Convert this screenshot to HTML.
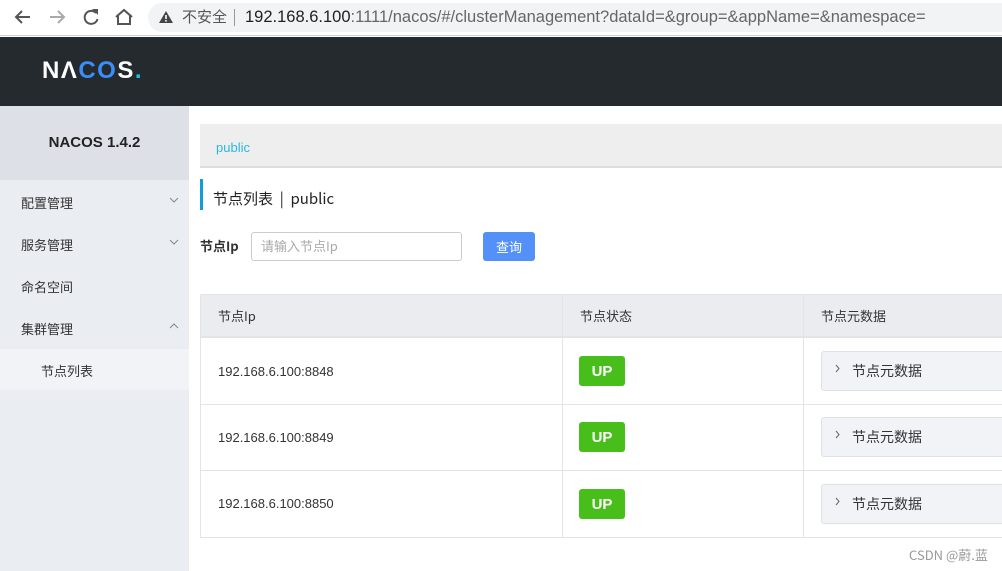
<!DOCTYPE html>
<html><head><meta charset="utf-8"><style>
*{margin:0;padding:0;box-sizing:border-box}
body{width:1002px;height:571px;overflow:hidden;background:#fff;font-family:"Liberation Sans","Noto Sans CJK SC",sans-serif;position:relative;color:#333}
.abs{position:absolute}
.cn{font-family:"Noto Sans CJK SC","WenQuanYi Zen Hei",sans-serif}
</style></head><body>
<div class="abs" style="left:0;top:0;width:1002px;height:36px;background:#fff;border-bottom:1px solid #d0d0d0"></div>
<svg class="abs" style="left:10px;top:6px" width="130" height="22" viewBox="0 0 130 22">
<path d="M20 11H6M12 5l-6 6 6 6" stroke="#555" stroke-width="2" fill="none"/>
<path d="M40 11h14M48 5l6 6-6 6" stroke="#aaa" stroke-width="2" fill="none"/>
<path d="M86 7a6.5 6.5 0 1 0 1.5 6" stroke="#555" stroke-width="2" fill="none"/><path d="M82 3h6v6z" fill="#555"/>
<path d="M106 11l8-7 8 7M108 9v9h12V9" stroke="#555" stroke-width="2" fill="none"/>
</svg>
<div class="abs" style="left:148px;top:3px;width:854px;height:29px;background:#f1f3f4;border-radius:15px 0 0 15px"></div>
<svg class="abs" style="left:158px;top:10px" width="16" height="14"><path d="M8 1L15 13H1z" fill="#444"/><rect x="7.2" y="5" width="1.6" height="4" fill="#fff"/><rect x="7.2" y="10" width="1.6" height="1.6" fill="#fff"/></svg>
<div class="abs cn" style="left:182px;top:7px;font-size:15px;color:#555;line-height:20px">不安全</div>
<div class="abs" style="left:234px;top:9px;width:1px;height:17px;background:#999"></div>
<div class="abs" style="left:245px;top:6px;font-size:16.5px;line-height:22px;color:#202124;white-space:nowrap">192.168.6.100<span style="color:#666">:1111/nacos/#/clusterManagement?dataId=&amp;group=&amp;appName=&amp;namespace=</span></div>
<div class="abs" style="left:0;top:37px;width:1002px;height:69px;background:#252a2f"></div>
<div class="abs" style="left:42px;top:57px;font-size:24px;font-weight:bold;color:#fff;letter-spacing:1.5px;line-height:28px">N&Lambda;<span style="color:#3a8ef6">CO</span>S<span style="color:#1fc3e0">.</span></div>
<div class="abs" style="left:0;top:106px;width:189px;height:465px;background:#eaedf1"></div>
<div class="abs" style="left:0;top:106px;width:189px;height:74px;background:#dde1e7"></div>
<div class="abs" style="left:0;top:143px;width:189px;text-align:center;font-size:15px;font-weight:bold;color:#222;line-height:0">NACOS 1.4.2</div>
<div class="abs cn" style="left:21px;top:194px;font-size:13px;color:#333;line-height:18px">配置管理</div>
<div class="abs cn" style="left:21px;top:236px;font-size:13px;color:#333;line-height:18px">服务管理</div>
<div class="abs cn" style="left:21px;top:278px;font-size:13px;color:#333;line-height:18px">命名空间</div>
<div class="abs cn" style="left:21px;top:320px;font-size:13px;color:#333;line-height:18px">集群管理</div>
<svg class="abs" style="left:168px;top:195px" width="12" height="140"><path d="M2 3l4 4 4-4M2 45l4 4 4-4M2 133l4-4 4 4" stroke="#888" fill="none"/></svg>
<div class="abs" style="left:0;top:349px;width:189px;height:41px;background:#f2f3f6"></div>
<div class="abs cn" style="left:41px;top:362px;font-size:13px;color:#333;line-height:18px">节点列表</div>
<div class="abs" style="left:200px;top:124px;width:802px;height:44px;background:#eeeeee;border-bottom:2px solid #ddd"></div>
<div class="abs" style="left:216px;top:139px;font-size:13px;color:#2cb6e0;line-height:18px">public</div>
<div class="abs" style="left:200px;top:179px;width:3px;height:31px;background:#119ed8"></div>
<div class="abs cn" style="left:213px;top:188px;font-size:15px;color:#222;line-height:22px;white-space:pre">节点列表  |  public</div>
<div class="abs cn" style="left:200px;top:237px;font-size:13px;font-weight:bold;color:#333;line-height:18px">节点Ip</div>
<div class="abs" style="left:251px;top:232px;width:211px;height:29px;border:1px solid #ccc;border-radius:3px;background:#fff"></div>
<div class="abs cn" style="left:261px;top:237px;font-size:13px;color:#aaa;line-height:18px">请输入节点Ip</div>
<div class="abs cn" style="left:483px;top:232px;width:52px;height:29px;background:#5391f8;border-radius:3px;color:#fff;font-size:13px;text-align:center;line-height:29px">查询</div>
<div class="abs" style="left:200px;top:294px;width:802px;height:244px;border:1px solid #e3e4e8;border-right:none"></div>
<div class="abs" style="left:201px;top:295px;width:801px;height:43px;background:#ebecf0;border-bottom:2px solid #e3e4e8"></div>
<div class="abs" style="left:562px;top:295px;width:1px;height:242px;background:#e3e4e8"></div>
<div class="abs" style="left:803px;top:295px;width:1px;height:242px;background:#e3e4e8"></div>
<div class="abs" style="left:201px;top:404px;width:801px;height:1px;background:#e3e4e8"></div>
<div class="abs" style="left:201px;top:470px;width:801px;height:1px;background:#e3e4e8"></div>
<div class="abs cn" style="left:218px;top:307px;font-size:13px;color:#333;line-height:18px">节点Ip</div>
<div class="abs cn" style="left:580px;top:307px;font-size:13px;color:#333;line-height:18px">节点状态</div>
<div class="abs cn" style="left:821px;top:307px;font-size:13px;color:#333;line-height:18px">节点元数据</div>
<div class="abs" style="left:218px;top:363px;font-size:13px;color:#333;line-height:18px">192.168.6.100:8848</div>
<div class="abs" style="left:218px;top:429px;font-size:13px;color:#333;line-height:18px">192.168.6.100:8849</div>
<div class="abs" style="left:218px;top:495px;font-size:13px;color:#333;line-height:18px">192.168.6.100:8850</div>
<div class="abs" style="left:579px;top:356px;width:46px;height:30px;background:#48be1a;border-radius:3px;color:#fff;font-size:15px;font-weight:bold;text-align:center;line-height:32px">UP</div>
<div class="abs" style="left:579px;top:422px;width:46px;height:30px;background:#48be1a;border-radius:3px;color:#fff;font-size:15px;font-weight:bold;text-align:center;line-height:32px">UP</div>
<div class="abs" style="left:579px;top:489px;width:46px;height:30px;background:#48be1a;border-radius:3px;color:#fff;font-size:15px;font-weight:bold;text-align:center;line-height:32px">UP</div>
<div class="abs cn" style="left:821px;top:351px;width:190px;height:40px;background:#f2f3f7;border:1px solid #e0e1e6;border-radius:3px;font-size:14px;color:#333;line-height:38px;padding-left:30px">节点元数据</div>
<div class="abs cn" style="left:821px;top:417px;width:190px;height:40px;background:#f2f3f7;border:1px solid #e0e1e6;border-radius:3px;font-size:14px;color:#333;line-height:38px;padding-left:30px">节点元数据</div>
<div class="abs cn" style="left:821px;top:484px;width:190px;height:40px;background:#f2f3f7;border:1px solid #e0e1e6;border-radius:3px;font-size:14px;color:#333;line-height:38px;padding-left:30px">节点元数据</div>
<svg class="abs" style="left:834px;top:364px" width="8" height="150"><path d="M2 1l3 3.5-3 3.5M2 67l3 3.5-3 3.5M2 134l3 3.5-3 3.5" stroke="#666" fill="none"/></svg>
<div class="abs cn" style="left:909px;top:546px;font-size:13px;color:#999;line-height:17px">CSDN @蔚.蓝</div>
</body></html>
